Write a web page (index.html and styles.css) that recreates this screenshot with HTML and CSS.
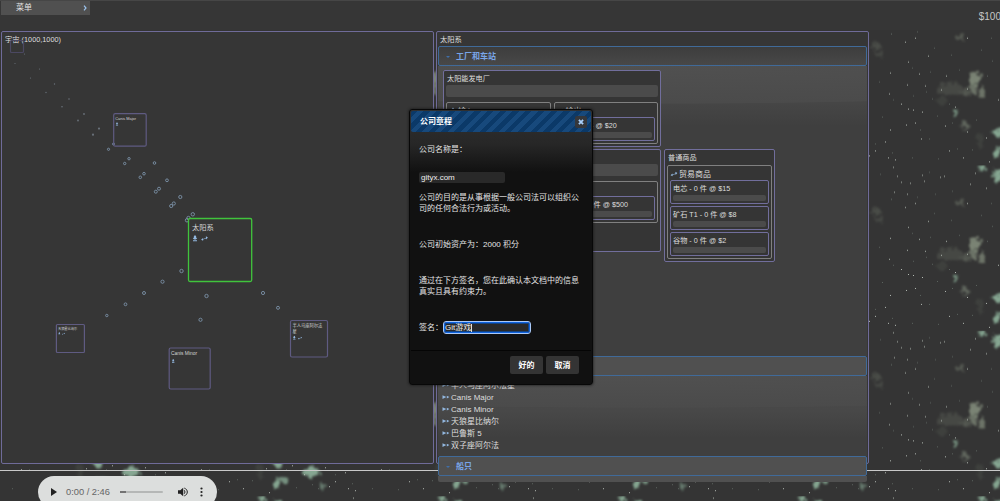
FILE: index.html
```html
<!DOCTYPE html>
<html lang="zh-CN">
<head>
<meta charset="utf-8">
<title>公司章程</title>
<link rel="stylesheet" href="styles.css">
</head>
<body>
<svg class="space" width="1000" height="501" aria-hidden="true">
  <defs>
    <filter id="cloud" x="-10%" y="-10%" width="120%" height="120%" color-interpolation-filters="sRGB">
      <feTurbulence type="fractalNoise" baseFrequency="0.2" numOctaves="3" seed="4" result="n"/>
      <feDisplacementMap in="SourceGraphic" in2="n" scale="10" xChannelSelector="R" yChannelSelector="G"/>
      <feGaussianBlur stdDeviation="1"/>
    </filter>
    <pattern id="tile" width="180" height="165.4" patternUnits="userSpaceOnUse">
      <g filter="url(#cloud)">
        <g fill="#7a8374">
          <ellipse cx="75" cy="79" rx="6" ry="6"/><ellipse cx="73" cy="90" rx="2.500" ry="6" opacity=".8"/><ellipse cx="82" cy="92" rx="3" ry="5" opacity=".8"/>
          <ellipse cx="65" cy="93" rx="5" ry="4" opacity=".45"/><ellipse cx="50" cy="89" rx="13" ry="6" opacity=".25"/><ellipse cx="43" cy="101" rx="6" ry="4" opacity=".15"/>
          <ellipse cx="65" cy="125" rx="3.500" ry="4" opacity=".65"/><ellipse cx="80" cy="141" rx="3" ry="8" opacity=".15"/>
          <ellipse cx="157" cy="46" rx="6" ry="3" opacity=".3"/><ellipse cx="158" cy="54" rx="3" ry="4" opacity=".25"/><ellipse cx="60" cy="37" rx="4" ry="2" opacity=".45"/>
        </g>
        <g fill="#86a792">
          <ellipse cx="56" cy="112" rx="3" ry="3" opacity=".8"/><ellipse cx="98" cy="133" rx="3.500" ry="5"/>
          <ellipse cx="96" cy="154" rx="3" ry="4"/><ellipse cx="98" cy="10" rx="4" ry="7"/>
          <ellipse cx="82" cy="3" rx="2.500" ry="3"/><ellipse cx="131" cy="141" rx="9" ry="5"/>
          <ellipse cx="103" cy="149" rx="5" ry="3" opacity=".8"/><ellipse cx="143" cy="156" rx="2.500" ry="3" opacity=".6"/>
        </g>
      </g>
      <path class="stars" d="M5 42h1M15 38h1M28 56h1M8 62h1M19 74h1M46 76h1M7 85h1M25 86h1M67 89h1M41 90h1M98 100h1M1 104h1M8 109h1M13 110h1M22 112h1M55 107h1M6 125h1M15 123h1M45 126h1M67 132h1M21 139h1M86 138h1M49 151h1M63 158h1M89 162h1M173 2h1M177 11h1M1 17h1M22 10h1M40 12h1M24 16h1M44 11h1M75 8h1M174 27h1M7 29h1M10 18h1M70 19h1M86 23h1M67 38h1M112 135h1M124 144h1M145 137h1M165 142h1M149 156h1M175 160h1M155 151h1M170 73h1M169 94h1M170 130h1M168 158h1"/>
      <path class="dust" d="M34 48h1M51 55h1M12 68h1M30 72h1M92 61h1M81 50h1M59 70h1M32 99h1M49 104h1M37 116h1M20 130h1M29 139h1M57 149h1M72 150h1M38 159h1M12 158h1M29 7h1M52 26h1M35 29h1M17 32h1M91 38h1M160 9h1M171 34h1M159 82h1M173 100h1M162 117h1M116 157h1M132 154h1M138 158h1M106 139h1M155 144h1M172 153h1M87 76h1M52 123h1M76 120h1M26 92h1M13 96h1"/>
    </pattern>
  </defs>
  <rect width="1000" height="501" fill="url(#tile)"/>
</svg>

<header class="topbar">
  <nav class="menu"><span>菜单</span><svg width="4" height="6" viewBox="0 0 4 6"><path d="M1 .7 3 3 1 5.3"/></svg></nav>
  <div class="cash">$100</div>
</header>

<main class="panels">
  <section class="panel">
    <div class="panel-title">宇宙 (1000,1000)</div>
    <svg class="map" width="431" height="431" viewBox="2 32 431 431">
      <defs>
        <g id="mic"><path d="M0-3.400 1.200-2v1.200l1 .6L.9 1H-.9L-2.200-.2l1-.6V-2zM-2 1.800h4v1h-4z"/></g>
        <g id="trade"><path d="M-3.400 1.300-1.600-.5v.9l3-1v-1.600L3.400-1 1.600 1V.1l-3 1v1.200z"/></g>
      </defs>
      <g class="far">
        <circle cx="15" cy="63.500" r=".6"/><circle cx="24.500" cy="54" r=".6"/><circle cx="30.500" cy="78" r=".6"/><circle cx="39.500" cy="69" r=".6"/><circle cx="46" cy="92.500" r=".7"/><circle cx="54.500" cy="84" r=".7"/><circle cx="62" cy="106.700" r=".8"/><circle cx="69" cy="99" r=".8"/><circle cx="78" cy="120.500" r=".9"/><circle cx="84" cy="114" r=".9"/><circle cx="93" cy="134.700" r="1.100"/><circle cx="99" cy="128.600" r="1.100"/>
      </g>
      <g class="route">
        <circle cx="108.500" cy="149.300" r="1.100"/><circle cx="113.500" cy="144" r="1"/><circle cx="124.700" cy="163.500" r="1.200"/><circle cx="129" cy="158.700" r="1.200"/><circle cx="154.500" cy="163" r="1.300"/><circle cx="140.300" cy="177.300" r="1.300"/><circle cx="144" cy="173.700" r="1.300"/><circle cx="167" cy="180.300" r="1.400"/><circle cx="155.800" cy="191.700" r="1.500"/><circle cx="159" cy="188.700" r="1.500"/><circle cx="180.300" cy="197" r="1.600"/><circle cx="171.200" cy="206" r="1.600"/><circle cx="173.800" cy="203.500" r="1.600"/><circle cx="192.800" cy="214.300" r="1.700"/><circle cx="187" cy="220.300" r="1.700"/><circle cx="188.500" cy="218" r="1.700"/>
        <circle cx="181.500" cy="271" r="1.700"/><circle cx="162.500" cy="281.700" r="1.600"/><circle cx="144" cy="293" r="1.500"/><circle cx="125.500" cy="304.300" r="1.400"/><circle cx="106.800" cy="315.500" r="1.200"/><circle cx="206.500" cy="296" r="1.700"/><circle cx="200.500" cy="319.800" r="1.600"/><circle cx="263" cy="293" r="1.600"/><circle cx="278" cy="307.800" r="1.500"/>
      </g>
      <rect class="sys faint" x="10.500" y="40.500" width="13" height="12" rx="1"/>
      <rect class="sys" x="113.700" y="113.700" width="32.500" height="32.500" rx="1.500"/>
      <rect class="sys home" x="188.500" y="218.500" width="63.200" height="63" rx="1.500"/>
      <rect class="sys" x="56.400" y="324.500" width="28" height="28" rx="1"/>
      <rect class="sys" x="169.200" y="348" width="41" height="41" rx="1.500"/>
      <rect class="sys" x="290.500" y="320.500" width="37" height="36.500" rx="1.500"/>
      <g class="label">
        <text x="192" y="229.500" font-size="7.300">太阳系</text>
        <text x="115.300" y="119.700" font-size="3.900">Canis Major</text>
        <text x="58" y="329.500" font-size="3.200">天狼星比纳尔</text>
        <text x="171" y="355.300" font-size="4.900">Canis Minor</text>
        <text x="292.500" y="327.200" font-size="4.250">半人马座阿尔法</text>
        <text x="292.500" y="333" font-size="4.250">星</text>
      </g>
      <g class="glyph">
        <use href="#mic" x="195" y="238.500"/><use href="#trade" x="204.500" y="238.500"/>
        <use href="#mic" transform="translate(117 124) scale(.55)"/>
        <use href="#mic" transform="translate(59.300 333.600) scale(.45)"/><use href="#trade" transform="translate(63.500 333.700) scale(.45)"/>
        <use href="#mic" transform="translate(173.200 361) scale(.6)"/>
        <use href="#mic" transform="translate(294.300 337.800) scale(.6)"/><use href="#trade" transform="translate(300 338) scale(.6)"/>
      </g>
    </svg>
  </section>

  <section class="panel system">
    <div class="panel-title">太阳系</div>
    <div class="accordion">
      <h3 class="acc-head"><i class="tri"></i>工厂和车站</h3>
      <div class="acc-body stations">
        <div class="card plant">
          <div class="name">太阳能发电厂</div><div class="bar"></div>
          <div class="io">
            <div class="group"><div class="gname"><svg class="glyph" width="8" height="8" viewBox="-4 -4 8 8"><use href="#mic"/></svg>输入</div></div>
            <div class="group"><div class="gname"><svg class="glyph" width="8" height="8" viewBox="-4 -4 8 8"><use href="#trade"/></svg>输出</div>
              <div class="good"><span>电芯 - 0 件 @ $20</span><div class="meter"></div></div></div>
          </div>
        </div>
        <div class="card mine">
          <div class="name">矿场</div><div class="bar"></div>
          <div class="io">
            <div class="group"><div class="gname"><svg class="glyph" width="8" height="8" viewBox="-4 -4 8 8"><use href="#mic"/></svg>输入</div></div>
            <div class="group"><div class="gname"><svg class="glyph" width="8" height="8" viewBox="-4 -4 8 8"><use href="#trade"/></svg>输出</div>
              <div class="good"><span>铁矿石 - 0 件 @ $500</span><div class="meter"></div></div></div>
          </div>
        </div>
        <div class="card market">
          <div class="name">普通商品</div>
          <div class="group">
            <div class="gname"><svg class="glyph" width="8" height="8" viewBox="-4 -4 8 8"><use href="#trade"/></svg>贸易商品</div>
            <div class="good"><span>电芯 - 0 件 @ $15</span><div class="meter"></div></div>
            <div class="good"><span>矿石 T1 - 0 件 @ $8</span><div class="meter"></div></div>
            <div class="good"><span>谷物 - 0 件 @ $2</span><div class="meter"></div></div>
          </div>
        </div>
      </div>
      <h3 class="acc-head"><i class="tri"></i>星门</h3>
      <ul class="acc-body gates">
        <li><svg class="glyph" width="8" height="5" viewBox="0 0 8 5"><path d="M.5.200 4.300 2.100.500 4zM4.800.800 7.400 2.100 4.800 3.400z"/></svg>半人马座阿尔法星</li>
        <li><svg class="glyph" width="8" height="5" viewBox="0 0 8 5"><path d="M.5.200 4.300 2.100.500 4zM4.800.800 7.400 2.100 4.800 3.400z"/></svg>Canis Major</li>
        <li><svg class="glyph" width="8" height="5" viewBox="0 0 8 5"><path d="M.5.200 4.300 2.100.500 4zM4.800.800 7.400 2.100 4.800 3.400z"/></svg>Canis Minor</li>
        <li><svg class="glyph" width="8" height="5" viewBox="0 0 8 5"><path d="M.5.200 4.300 2.100.500 4zM4.800.800 7.400 2.100 4.800 3.400z"/></svg>天狼星比纳尔</li>
        <li><svg class="glyph" width="8" height="5" viewBox="0 0 8 5"><path d="M.5.200 4.300 2.100.500 4zM4.800.800 7.400 2.100 4.800 3.400z"/></svg>巴鲁斯 5</li>
        <li><svg class="glyph" width="8" height="5" viewBox="0 0 8 5"><path d="M.5.200 4.300 2.100.500 4zM4.800.800 7.400 2.100 4.800 3.400z"/></svg>双子座阿尔法</li>
      </ul>
      <h3 class="acc-head"><i class="tri"></i>船只</h3>
      <div class="acc-body ships"></div>
    </div>
  </section>
</main>

<footer class="footer">
  <div class="player">
    <svg width="6" height="8" viewBox="0 0 6 8"><path d="M0 0 6 4 0 8z"/></svg>
    <span class="time">0:00 / 2:46</span>
    <div class="track"><div class="played"></div></div>
    <svg class="vol" width="10" height="10" viewBox="0 0 10 10"><path d="M0 3.300h2.300L5.200.800v8.400L2.300 6.700H0z"/><path class="wave" d="M6.200 3.200q1.700 1.800 0 3.600M6.300 1.100c4 1.400 4 6.400 0 7.800"/></svg>
    <svg width="3" height="10" viewBox="0 0 3 10"><circle cx="1.500" cy="1.500" r="1.100"/><circle cx="1.500" cy="5" r="1.100"/><circle cx="1.500" cy="8.500" r="1.100"/></svg>
  </div>
</footer>

<div class="dialog" role="dialog">
  <div class="titlebar"><b>公司章程</b><span class="close"><svg width="6" height="6" viewBox="0 0 6 6"><path d="M.9.900 5.100 5.100M5.100.900.900 5.100"/></svg></span></div>
  <div class="content">
    <p class="p1">公司名称是：</p>
    <div class="field">gityx.com</div>
    <p class="p2">公司的目的是从事根据一般公司法可以组织公<br>司的任何合法行为或活动。</p>
    <p class="p3">公司初始资产为：2000 积分</p>
    <p class="p4">通过在下方签名，您在此确认本文档中的信息<br>真实且具有约束力。</p>
    <div class="sign"><span>签名：</span><div class="field focus">Git游戏<i class="caret"></i></div></div>
  </div>
  <div class="buttons"><span class="btn">好的</span><span class="btn">取消</span></div>
</div>
</body>
</html>
```

FILE: styles.css
```css
* { box-sizing: border-box; }
body { margin: 0; width: 1000px; height: 501px; overflow: hidden; position: relative; background: #343434; color: #dedede; font: 8px/12px "Liberation Sans", "Noto Sans CJK SC", sans-serif; }
svg { display: block; flex: none; }
.space { position: absolute; left: 0; top: 0; z-index: -1; }
.stars { stroke: #b4bbb4; stroke-width: 1; fill: none; }
.dust { stroke: #5c645f; stroke-width: 1; fill: none; }

.topbar { height: 30px; background: #363636; border-top: 1px solid #464646; display: flex; justify-content: space-between; align-items: flex-start; }
.menu { width: 89px; height: 14px; margin-left: 1px; padding: 0 3px 0 15px; background: #505050; display: flex; align-items: center; justify-content: space-between; color: #e0e0e0; }
.menu path { fill: none; stroke: #9dc4ee; stroke-width: 1.2; }
.cash { font-size: 10px; margin-top: 10px; margin-right: -1px; color: #c5c5c5; }

.panels { display: flex; gap: 2px; padding: 1px 0 0 1px; height: 441px; border-bottom: 1px solid #c9c9c9; }
.panel { width: 433px; height: 433px; border: 1px solid #6f6b99; border-radius: 2px; background: #363636; }
.panel-title { height: 14px; padding: 2px 0 0 3px; line-height: 12px; font-size: 7.3px; white-space: nowrap; }
.map { margin-top: -14px; }
.far { fill: #69717a; }
.route { fill: none; stroke: #7c92a8; stroke-width: .9; }
.sys { fill: none; stroke: #5f5b82; stroke-width: 1.2; }
.sys.faint { stroke: #4b4862; }
.sys.home { stroke: #40c43c; stroke-width: 1.3; fill: #363636; }
.label { fill: #d4d4d4; }
.glyph { fill: #93b8e0; }

.accordion { width: 429px; margin-left: 1px; }
.acc-head { margin: 0; height: 20px; border: 1px solid #406a99; border-radius: 2px; background: #505050; color: #79a5e8; font-size: 8px; line-height: 18px; padding: 1px 0 0 7px; display: flex; align-items: center; }
.accordion .acc-head:first-child { background: linear-gradient(#3d3d3d, #484848); }
.tri { width: 0; margin-right: 6px; border: 2px solid transparent; border-top-color: #3f6ea8; border-bottom: 0; }
.stations { height: 290px; display: grid; grid-template-columns: 218px 111px; grid-template-rows: 76px 113px; gap: 3px; padding: 4px 0 0 5px; align-items: start; background: radial-gradient(ellipse 620px 38px at 50% 0, #505050 0, #4b4b4b 98%, transparent 100%), linear-gradient(#4b4b4b 0, #4b4b4b 20px, #3f3f3f 60px); }
.card { border: 1px solid #716e9c; border-radius: 2px; background: #353535; padding: 2px; }
.plant { height: 77px; grid-column: 1 / 3; width: 218px; }
.mine { height: 103px; }
.market { height: 113px; }
.name { height: 12px; line-height: 13px; padding-left: 1px; font-size: 7.15px; }
.bar { height: 12px; background: #4b4b4b; border-radius: 2px; margin-bottom: 5px; }
.io { display: grid; grid-template-columns: 1fr 1fr; gap: 3px; align-items: start; }
.group { border: 1px solid #808080; border-radius: 2px; padding: 2px; min-height: 42px; }
.market .group { margin-top: 1px; }
.gname { height: 12px; gap: 1px; line-height: 13px; display: flex; align-items: center; }
.good { height: 24px; margin-bottom: 2px; border: 1px solid #716e9c; border-radius: 2px; padding: 1px 2px; }
.good:last-child { margin-bottom: 0; }
.good span { display: block; height: 13px; line-height: 14px; font-size: 7.2px; white-space: nowrap; }
.meter { height: 6px; background: #4b4b4b; border-radius: 2px; }
.gates { list-style: none; margin: 0; padding: 4px 4px 0; height: 80px; background: radial-gradient(ellipse 620px 32px at 50% 0, #505050 0, #4b4b4b 98%, transparent 100%), linear-gradient(#4a4a4a 0, #484848 35px, #3f3f3f 62px); }
.gates li { height: 12px; display: flex; align-items: center; }
.gates svg { margin: -2px 1px 0 0; }
.ships { height: 6px; background: #505050; border-radius: 0 0 2px 2px; }

.footer { padding: 5px 0 0 38px; }
.player { width: 179px; height: 32px; border-radius: 16px; background: #dcdedd; display: flex; align-items: center; padding-left: 13px; color: #656565; fill: #222; font-size: 9.3px; }
.time { margin-left: 9px; width: 54px; white-space: nowrap; }
.track { width: 43px; height: 2px; border-radius: 1px; background: #b5b7b6; }
.played { width: 6px; height: 2px; background: #737373; }
.vol { margin: 0 12px 0 15px; }
.wave { fill: none; stroke: #222; stroke-width: 1; }

.dialog { position: absolute; left: 409px; top: 109px; width: 184px; height: 276px; border: 1px solid #080808; border-radius: 3px; padding: 1px; background: linear-gradient(#303030 0, #272727 34px, #111 62px); box-shadow: 0 0 3px #111; color: #e4e4e4; }
.titlebar { height: 21px; border-radius: 2px; background: repeating-linear-gradient(135deg, #0b3968 0 4.5px, #17497c 4.5px 9px); display: flex; align-items: center; justify-content: space-between; padding: 1px 4px 0 9px; color: #fff; }
.close { width: 12px; height: 12px; background: #35373b; border-radius: 2px; display: flex; align-items: center; justify-content: center; }
.close path { stroke: #a9cffa; stroke-width: 1.8; }
.content { height: 219px; padding: 12px 8px 0; line-height: 11px; border-bottom: 1px solid #050505; white-space: nowrap; }
.content p { margin: 0; }
.p1 { height: 28px; }
.field { width: 86px; height: 11px; background: #292929; border-radius: 2px; line-height: 11px; padding-left: 2px; color: #eee; }
.p2 { padding-top: 9px; height: 56px; }
.p3 { height: 36px; }
.p4 { height: 47px; }
.sign { display: flex; align-items: center; }
.focus { width: 86px; height: 11px; margin-left: 1px; padding-left: 0; border: 1px solid #0f62de; outline: 1px solid #a9c9f8; box-shadow: inset 0 0 0 1px #12417f; display: flex; align-items: center; }
.caret { width: 1px; height: 8px; background: #ddd; }
.buttons { display: flex; gap: 3px; justify-content: flex-end; padding: 5px 12px; }
.btn { width: 33px; height: 18px; border-radius: 2px; background: #343434; color: #fff; font-weight: bold; line-height: 19px; text-align: center; }
```
